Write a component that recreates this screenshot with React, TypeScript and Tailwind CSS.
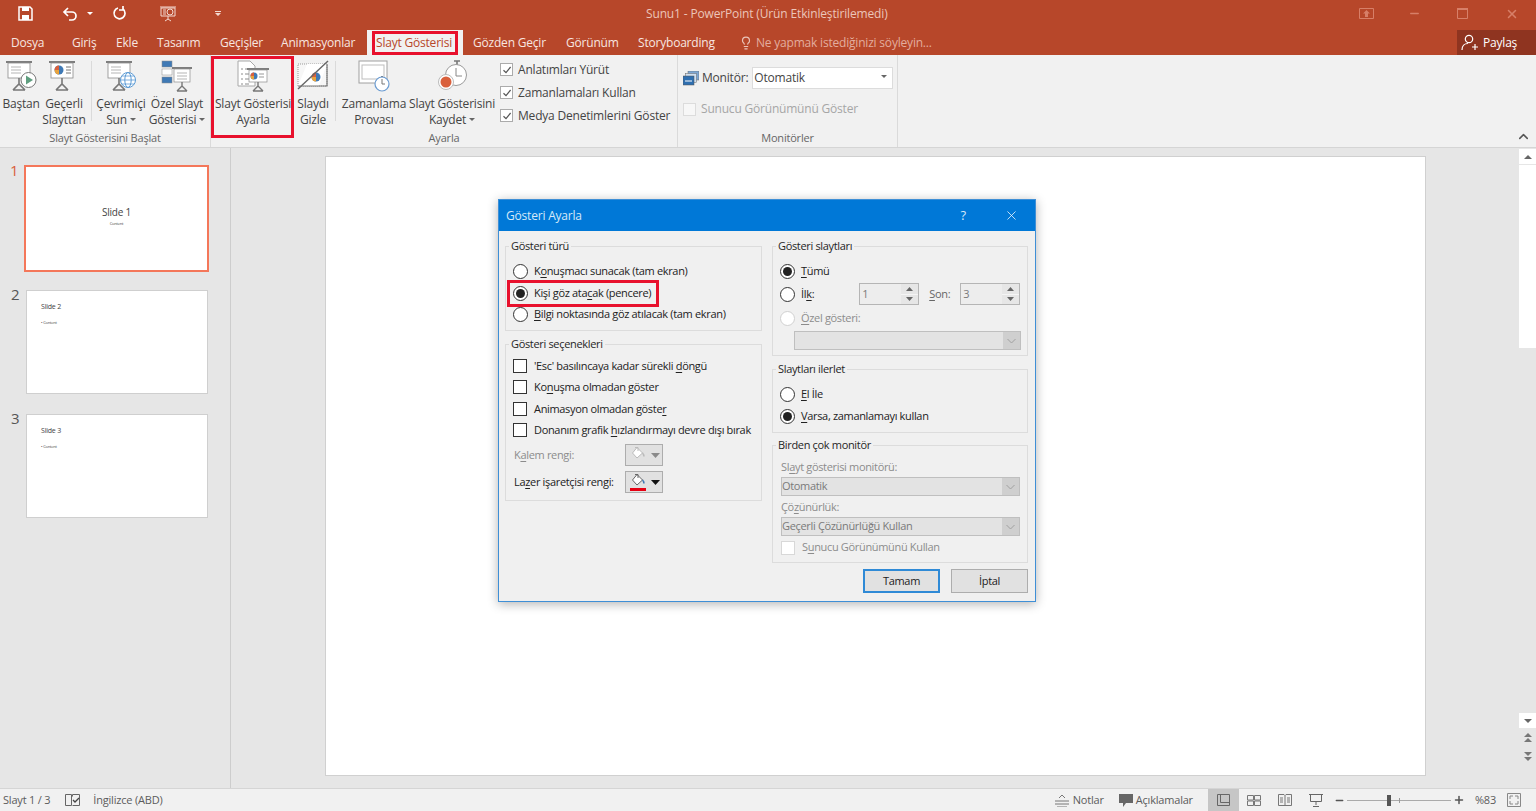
import type { ReactNode } from "react"
import { ChevronUp, Lightbulb, Minus, Plus, X } from "lucide-react"

const Caret = ({ color = "#666" }: { color?: string }) => (
  <svg width="6" height="4" viewBox="0 0 6 4" className="inline-block ml-[3px] mb-[2px]"><path d="M0 0h6L3 3z" fill={color} /></svg>
)

const Board = ({ children, stroke = "#8c8c8c" }: { children?: ReactNode; stroke?: string }) => (
  <>
    <rect x="1" y="1" width="26" height="2" fill="#7d7d7d" />
    <rect x="3" y="3" width="22" height="15" fill="#fff" stroke={stroke} strokeWidth="0.8" />
    <path d="M14 18v6M8 30l6-6 6 6M8 30h12" fill="none" stroke="#777" strokeWidth="1.6" />
    {children}
  </>
)

const Lines = () => <path d="M6 7h10M6 10h10M6 13h10" stroke="#b5b5b5" strokeWidth="1" />

const Pie = ({ cx, cy, r }: { cx: number; cy: number; r: number }) => (
  <>
    <circle cx={cx} cy={cy} r={r} fill="#3f79b5" />
    <path d={`M${cx} ${cy}V${cy - r}A${r} ${r} 0 0 0 ${cx - r} ${cy}z`} fill="#d9603c" />
    <path d={`M${cx} ${cy}H${cx - r}A${r} ${r} 0 0 0 ${cx} ${cy + r}z`} fill="#e8a33d" />
  </>
)

const Icon32 = ({ children }: { children: ReactNode }) => (
  <svg width="32" height="32" viewBox="0 0 32 32" className="mx-auto block">{children}</svg>
)

const FromStartIcon = () => (
  <Icon32>
    <Board><Lines /></Board>
    <circle cx="23.5" cy="20" r="7.5" fill="#fff" stroke="#777" />
    <path d="M21 15.5v9l7-4.5z" fill="#5f9e7f" />
  </Icon32>
)
const CurrentIcon = () => (
  <Icon32>
    <Board><Pie cx={11} cy={10} r={4.5} /><path d="M18 7h5M18 10h5M18 13h5" stroke="#777" /></Board>
  </Icon32>
)
const OnlineIcon = () => (
  <Icon32>
    <Board><Lines /></Board>
    <circle cx="23" cy="20" r="7.5" fill="#fff" stroke="#5b9bd5" />
    <ellipse cx="23" cy="20" rx="3.2" ry="7.5" fill="none" stroke="#5b9bd5" />
    <path d="M15.5 20h15M17 16h12M17 24h12" stroke="#5b9bd5" strokeWidth="0.8" />
  </Icon32>
)
const CustomIcon = () => (
  <Icon32>
    <rect x="1" y="1" width="10" height="6" fill="#3f79b5" stroke="#8c8c8c" strokeWidth="0.5" />
    <rect x="1" y="9" width="10" height="6" fill="#fff" stroke="#8c8c8c" strokeWidth="0.5" />
    <rect x="1" y="17" width="10" height="6" fill="#3f79b5" stroke="#8c8c8c" strokeWidth="0.5" />
    <rect x="11" y="7" width="20" height="2" fill="#7d7d7d" />
    <rect x="13" y="9" width="16" height="13" fill="#fff" stroke="#8c8c8c" strokeWidth="0.7" />
    <path d="M16 13h10M16 16h10M16 19h10" stroke="#b5b5b5" />
    <path d="M21 22v4M16 31l5-5 5 5M16 31h10" fill="none" stroke="#777" strokeWidth="1.4" />
  </Icon32>
)
const SetupIcon = () => (
  <Icon32>
    <path d="M1 1h12l5 5v20H1z" fill="#fff" stroke="#a8a8a8" />
    <path d="M4 9h2M8 9h5M4 14h2M8 14h4M4 19h2M8 19h4M4 24h2M8 24h4" stroke="#8c8c8c" />
    <rect x="10" y="8" width="22" height="2" fill="#7d7d7d" />
    <rect x="12" y="10" width="18" height="12" fill="#fff" stroke="#8c8c8c" strokeWidth="0.7" />
    <Pie cx={17} cy={16} r={3.5} />
    <path d="M22 14h5M22 17h5" stroke="#999" />
    <path d="M21 22v4M16 31l5-5 5 5M16 31h10" fill="none" stroke="#777" strokeWidth="1.4" />
  </Icon32>
)
const HideIcon = () => (
  <Icon32>
    <rect x="1" y="4" width="29" height="22" fill="#f7f7f7" stroke="#999" strokeDasharray="1 1" />
    <path d="M30 4H10L1 26h21z" fill="#fff" />
    <Pie cx={19} cy={17} r={4.5} />
    <path d="M31 1 1 29" stroke="#666" strokeWidth="1.4" />
    <path d="M1 26h29V4" fill="none" stroke="#777" strokeWidth="1.2" />
  </Icon32>
)
const RehearseIcon = () => (
  <Icon32>
    <rect x="1" y="1" width="28" height="22" fill="#fff" stroke="#a0a0a0" />
    <rect x="4" y="5" width="22" height="14" fill="#fff" stroke="#bdbdbd" />
    <path d="M23 17h2" stroke="#777" strokeWidth="2" />
    <circle cx="24" cy="24" r="7" fill="#fff" stroke="#6a9bd1" strokeWidth="1.2" />
    <path d="M24 19v5h3" fill="none" stroke="#777" />
  </Icon32>
)
const RecordIcon = () => (
  <Icon32>
    <path d="M18 1h6M21 1v4" stroke="#777" strokeWidth="1.6" />
    <circle cx="20" cy="15" r="10.5" fill="#fff" stroke="#9a9a9a" />
    <path d="M20 8v8h6" fill="none" stroke="#888" />
    <circle cx="10" cy="22" r="7.5" fill="#fff" stroke="#bbb" />
    <circle cx="10" cy="22" r="5.5" fill="#d9603c" />
  </Icon32>
)

const RibbonButton = ({ w, icon, lines, caret }: { w: string; icon: ReactNode; lines: string[]; caret?: boolean }) => (
  <div className={`${w} pt-[5px] text-center shrink-0`}>
    {icon}
    <div className="mt-[4px] leading-[16px] whitespace-nowrap">
      {lines.map((l, i) => (
        <div key={l}>{l}{caret && i === lines.length - 1 && <Caret />}</div>
      ))}
    </div>
  </div>
)

const GroupLabel = ({ children }: { children: ReactNode }) => (
  <div className="h-[16px] leading-[16px] text-center text-[11px] text-[#666]">{children}</div>
)

const ShortSep = () => (
  <div className="w-[8px] shrink-0 flex justify-center pt-[6px]"><div className="w-px h-[60px] bg-[#dadada]" /></div>
)

const RibbonCheck = ({ label }: { label: string }) => (
  <div className="flex items-center h-[23px]">
    <div className="w-[13px] h-[13px] bg-white border border-[#ababab] flex items-center justify-center">
      <svg width="10" height="10" viewBox="0 0 10 10"><path d="M1.5 5.2 4 7.6 8.6 2" fill="none" stroke="#555" strokeWidth="1.2" /></svg>
    </div>
    <span className="ml-[5px]">{label}</span>
  </div>
)

const Tab = ({ w, children }: { w: string; children: ReactNode }) => (
  <div className={`${w} shrink-0 whitespace-nowrap`}>{children}</div>
)

const Key = ({ children }: { children: ReactNode }) => <span className="underline underline-offset-2">{children}</span>

const Legend = ({ children }: { children: ReactNode }) => (
  <legend className="ml-[3px] px-[2px] h-[16px] leading-[16px] text-[#262626]">{children}</legend>
)

const Radio = ({ on, off }: { on?: boolean; off?: boolean }) => (
  <span className={`w-[15px] h-[15px] rounded-full bg-white border flex items-center justify-center shrink-0 ${off ? "border-[#d0d0d0]" : "border-[#333]"}`}>
    {on && <span className="w-[9px] h-[9px] rounded-full bg-[#222]" />}
  </span>
)

const Box = ({ off }: { off?: boolean }) => (
  <span className={`w-[14px] h-[14px] bg-white border shrink-0 ${off ? "border-[#d8d8d8]" : "border-[#333]"}`} />
)

const DisabledSelect = ({ value, w = "w-full" }: { value?: string; w?: string }) => (
  <div className={`${w} h-[19px] flex items-center bg-[#e3e3e3] border border-[#bfbfbf] text-[#7a7a7a]`}>
    <span className="flex-1 truncate">{value}</span>
    <span className="w-[17px] h-full bg-[#cfcfcf] flex items-center justify-center">
      <svg width="9" height="6" viewBox="0 0 9 6"><path d="M.5 1 4.5 5l4-4" fill="none" stroke="#a0a0a0" /></svg>
    </span>
  </div>
)

const Spinner = ({ value }: { value: string }) => (
  <div className="w-[60px] h-[22px] flex bg-[#ededed] border border-[#b5b5b5] text-[#7a7a7a] pl-[2px]">
    <span className="flex-1 leading-[20px]">{value}</span>
    <span className="w-[17px] flex flex-col bg-[#e6e6e6]">
      <span className="flex-1 flex items-center justify-center border-b border-[#f5f5f5]"><svg width="7" height="4" viewBox="0 0 7 4"><path d="M0 4h7L3.5 0z" fill="#666" /></svg></span>
      <span className="flex-1 flex items-center justify-center"><svg width="7" height="4" viewBox="0 0 7 4"><path d="M0 0h7L3.5 4z" fill="#666" /></svg></span>
    </span>
  </div>
)

const PaintButton = ({ active }: { active?: boolean }) => (
  <div className="w-[38px] h-[22px] ml-auto bg-[#e1e1e1] border border-[#adadad] flex items-center pl-[4px] gap-[5px] shrink-0">
    <svg width="16" height="18" viewBox="0 0 16 18">
      <path d="M7 1.5 2.5 7l4.5 5 5.5-5z" fill="#fff" stroke={active ? "#666" : "#bbb"} />
      <path d="M5 1.5h3V5" fill="none" stroke={active ? "#666" : "#bbb"} />
      <path d="M12.5 7c1.2 1.2 1.6 2.4 1.2 3.6" fill="none" stroke={active ? "#3f79b5" : "#bbb"} strokeWidth="1.5" />
      {active && <rect x="0" y="15" width="16" height="3" fill="#e60012" />}
    </svg>
    <svg width="9" height="5" viewBox="0 0 9 5"><path d="M0 0h9L4.5 5z" fill={active ? "#111" : "#8a8a8a"} /></svg>
  </div>
)

const Thumb = ({ n, title, bullet, mt }: { n: number; title: string; bullet: string; mt: string }) => (
  <div className={`${mt} flex pl-[11px]`}>
    <span className="w-[15px] text-[15px] leading-[18px] text-[#555] -mt-[5px]">{n}</span>
    <div className="w-[182px] h-[104px] bg-white border border-[#cfcfcf] pl-[14px] pt-[10px] text-[#444]">
      <div className="text-[7px] leading-[12px]">{title}</div>
      <div className="text-[4px] leading-[6px] mt-[7px]">• {bullet}</div>
    </div>
  </div>
)

const ViewBtn = ({ active, children }: { active?: boolean; children: ReactNode }) => (
  <div className={`w-[31px] h-[22px] flex items-center justify-center ${active ? "bg-[#c6c6c6]" : ""}`}>{children}</div>
)

export default function App() {
  return (
    <div className="relative w-[1536px] h-[811px] flex flex-col overflow-hidden bg-[#e6e6e6] text-[12px] text-[#444] font-['Open_Sans','Liberation_Sans',sans-serif] tracking-[-0.2px]">
      {/* title bar */}
      <div className="h-[30px] bg-[#b7472a] flex items-center text-[#f6dfd8] relative shrink-0">
        <svg width="15" height="15" viewBox="0 0 15 15" className="ml-[18px] mb-[3px]"><path d="M1 1h11l2 2v11H1z" fill="none" stroke="#fff" strokeWidth="1.5" /><path d="M4 1h7v4H4zM4 9h7v5H4z" fill="#fff" /></svg>
        <svg width="16" height="14" viewBox="0 0 16 14" className="ml-[29px] mb-[3px]"><path d="M6 1 2 5l4 4M2 5h8a4 4 0 0 1 0 8H7" fill="none" stroke="#fff" strokeWidth="1.7" /></svg>
        <svg width="6" height="4" viewBox="0 0 6 4" className="ml-[9px] mb-[3px]"><path d="M0 0h6L3 3z" fill="#fff" /></svg>
        <svg width="15" height="15" viewBox="0 0 15 15" className="ml-[19px] mb-[3px]"><path d="M6 2a5.5 5.5 0 1 0 5 1M11 0v4H7" fill="none" stroke="#fff" strokeWidth="1.7" /></svg>
        <svg width="17" height="16" viewBox="0 0 17 16" className="ml-[33px] mb-[3px]"><path d="M0 1h16M1 2h14v8H1zM8 10v3M5 15l3-2 3 2" fill="none" stroke="#f3d9d1" /><circle cx="10" cy="6" r="3" fill="none" stroke="#f3d9d1" /><path d="M3 4h3M3 6h3M3 8h3" stroke="#f3d9d1" /></svg>
        <svg width="6" height="6" viewBox="0 0 6 6" className="ml-[38px] mb-[3px]"><path d="M0 0h6v1H0zM0 2h6L3 5z" fill="#f3d9d1" /></svg>
        <div className="ml-[425px] mb-[3px] text-[12px] tracking-[-0.15px] text-[#ecc5b9] whitespace-nowrap">Sunu1 - PowerPoint (Ürün Etkinleştirilemedi)</div>
        <div className="ml-auto mb-[3px] flex items-center text-[#d77f68]">
          <svg width="15" height="11" viewBox="0 0 15 11"><path d="M.5.5h14v10H.5z" fill="none" stroke="#d77f68" /><path d="M7.5 2 4 5.5h2V9h3V5.5h2z" fill="#d77f68" /></svg>
          <Minus size={13} strokeWidth={2.4} className="ml-[34px]" />
          <svg width="11" height="11" viewBox="0 0 11 11" className="ml-[36px]"><path d="M.5.5h10v10H.5z" fill="none" stroke="#d77f68" /><path d="M0 0h11v2H0z" fill="#d77f68" /></svg>
          <X size={14} strokeWidth={2.6} className="ml-[37px] mr-[17px]" />
        </div>
      </div>

      {/* tabs */}
      <div className="h-[25px] bg-[#b7472a] flex items-center pl-[11px] text-[#f8e6e0] shrink-0">
        <Tab w="w-[61px]">Dosya</Tab>
        <Tab w="w-[44px]">Giriş</Tab>
        <Tab w="w-[41px]">Ekle</Tab>
        <Tab w="w-[63px]">Tasarım</Tab>
        <Tab w="w-[61px]">Geçişler</Tab>
        <Tab w="w-[86px]">Animasyonlar</Tab>
        <div className="relative w-[96px] h-full bg-[#f1f1f1] text-[#b7472a] pl-[9px] flex items-center shrink-0 whitespace-nowrap">
          Slayt Gösterisi
          <div className="absolute left-[5px] right-[5px] top-[1px] bottom-0 border-[3px] border-[#e8112d]" />
        </div>
        <Tab w="w-[93px] ml-[10px]">Gözden Geçir</Tab>
        <Tab w="w-[72px]">Görünüm</Tab>
        <Tab w="w-[101px]">Storyboarding</Tab>
        <Lightbulb size={14} className="text-[#eac4b9] shrink-0" />
        <span className="ml-[3px] text-[#e3ad9e] whitespace-nowrap">Ne yapmak istediğinizi söyleyin...</span>
        <div className="ml-auto w-[79px] h-full bg-[#8f3420] text-white flex items-center pl-[4px] shrink-0">
          <svg width="17" height="17" viewBox="0 0 17 17"><circle cx="8" cy="5" r="3.7" fill="none" stroke="#fff" strokeWidth="1.2" /><path d="M1 16c0-4 2.5-6.5 6-6.5M11 13h6M14 10v6" fill="none" stroke="#fff" strokeWidth="1.2" /></svg>
          <span className="ml-[5px]">Paylaş</span>
        </div>
      </div>

      {/* ribbon */}
      <div className="h-[93px] bg-[#f1f1f1] border-b border-[#d5d5d5] flex shrink-0">
        <div className="w-[211px] border-r border-[#dadada] flex flex-col shrink-0">
          <div className="h-[75px] flex pl-[1px]">
            <RibbonButton w="w-[40px]" icon={<FromStartIcon />} lines={["Baştan"]} />
            <RibbonButton w="w-[46px]" icon={<CurrentIcon />} lines={["Geçerli", "Slayttan"]} />
            <ShortSep />
            <RibbonButton w="w-[52px]" icon={<OnlineIcon />} lines={["Çevrimiçi", "Sun"]} caret />
            <RibbonButton w="w-[60px]" icon={<CustomIcon />} lines={["Özel Slayt", "Gösterisi"]} caret />
          </div>
          <GroupLabel>Slayt Gösterisini Başlat</GroupLabel>
        </div>
        <div className="w-[467px] border-r border-[#dadada] flex flex-col shrink-0">
          <div className="h-[75px] flex">
            <div className="relative">
              <RibbonButton w="w-[84px]" icon={<SetupIcon />} lines={["Slayt Gösterisi", "Ayarla"]} />
              <div className="absolute left-0 top-[1px] w-[83px] h-[82px] border-[3px] border-[#e8112d]" />
            </div>
            <RibbonButton w="w-[36px]" icon={<HideIcon />} lines={["Slaydı", "Gizle"]} />
            <ShortSep />
            <RibbonButton w="w-[70px]" icon={<RehearseIcon />} lines={["Zamanlama", "Provası"]} />
            <RibbonButton w="w-[86px]" icon={<RecordIcon />} lines={["Slayt Gösterisini", "Kaydet"]} caret />
            <div className="pl-[5px] pt-[3px] whitespace-nowrap">
              <RibbonCheck label="Anlatımları Yürüt" />
              <RibbonCheck label="Zamanlamaları Kullan" />
              <RibbonCheck label="Medya Denetimlerini Göster" />
            </div>
          </div>
          <GroupLabel>Ayarla</GroupLabel>
        </div>
        <div className="w-[220px] border-r border-[#dadada] flex flex-col shrink-0">
          <div className="h-[75px] pl-[5px] pt-[12px]">
            <div className="flex items-center h-[22px]">
              <svg width="16" height="15" viewBox="0 0 16 15"><rect x="5" y="0" width="11" height="9" fill="#7da7d4" stroke="#666" strokeWidth="0.5" /><rect x="2.5" y="2.5" width="11" height="9" fill="#cfe0f2" stroke="#666" strokeWidth="0.5" /><rect x="0" y="5" width="11" height="9" fill="#2f6fb0" stroke="#555" strokeWidth="0.5" /><path d="M2 10h7" stroke="#fff" /></svg>
              <span className="ml-[3px]">Monitör:</span>
              <div className="ml-[4px] w-[141px] h-[22px] bg-white border border-[#dcdcdc] flex items-center pl-[1px] pr-[5px]">
                <span className="flex-1">Otomatik</span>
                <Caret />
              </div>
            </div>
            <div className="flex items-center h-[14px] mt-[13px] text-[#a6a6a6]">
              <span className="w-[13px] h-[13px] bg-[#f7f7f7] border border-[#dcdcdc]" />
              <span className="ml-[5px]">Sunucu Görünümünü Göster</span>
            </div>
          </div>
          <GroupLabel>Monitörler</GroupLabel>
        </div>
        <div className="flex-1 flex items-end justify-end pr-[5px] pb-[3px]">
          <ChevronUp size={15} strokeWidth={2.4} className="text-[#555]" />
        </div>
      </div>

      {/* main */}
      <div className="flex-1 flex min-h-0">
        <div className="w-[231px] border-r border-[#cdcdcd] pt-[17px] shrink-0">
          <div className="flex pl-[11px]">
            <span className="w-[13px] text-[15px] leading-[18px] text-[#d9603c] -mt-[4px] -ml-[1px] mr-[1px]">1</span>
            <div className="w-[185px] h-[107px] bg-white border-[2px] border-[#f4775a] flex flex-col items-center pt-[39px] text-[#444]">
              <div className="text-[10px] leading-[12px]">Slide 1</div>
              <div className="text-[4px] leading-[6px] mt-[3px]">Content</div>
            </div>
          </div>
          <Thumb n={2} title="Slide 2" bullet="Content" mt="mt-[18px]" />
          <Thumb n={3} title="Slide 3" bullet="Content" mt="mt-[20px]" />
        </div>
        <div className="flex-1 pl-[94px] pt-[8px]">
          <div className="w-[1101px] h-[620px] bg-white border border-[#d0d0d0]" />
        </div>
        <div className="w-[17px] flex flex-col items-center shrink-0 pt-[1px]">
          <div className="w-full h-[15px] bg-white flex items-center justify-center"><svg width="8" height="4" viewBox="0 0 8 4"><path d="M0 4h8L4 0z" fill="#666" /></svg></div>
          <div className="w-full h-[183px] mt-[1px] bg-white" />
          <div className="w-full h-[15px] mt-[365px] bg-white flex items-center justify-center"><svg width="8" height="4" viewBox="0 0 8 4"><path d="M0 0h8L4 4z" fill="#666" /></svg></div>
          <svg width="8" height="9" viewBox="0 0 8 9" className="mt-[5px]"><path d="M0 4h8L4 0zM0 9h8L4 5z" fill="#777" /></svg>
          <svg width="8" height="9" viewBox="0 0 8 9" className="mt-[10px]"><path d="M0 0h8L4 4zM0 5h8L4 9z" fill="#777" /></svg>
        </div>
      </div>

      {/* status bar */}
      <div className="h-[23px] bg-[#f1f1f1] border-t border-[#d5d5d5] flex items-center text-[11px] text-[#5c5c5c] shrink-0">
        <span className="ml-[3px]">Slayt 1 / 3</span>
        <svg width="15" height="13" viewBox="0 0 15 13" className="ml-[15px]"><path d="M.5.5h6v11h-6zM7.5 2.5V.5h7v11h-7" fill="none" stroke="#666" /><path d="m8 6 2 2 4-4" fill="none" stroke="#444" strokeWidth="1.3" /></svg>
        <span className="ml-[13px]">İngilizce (ABD)</span>
        <div className="ml-auto flex items-center">
          <svg width="14" height="13" viewBox="0 0 14 13"><path d="M0 7h14M0 10h14M2 13h10M4 4l3-3 3 3" fill="none" stroke="#777" /></svg>
          <span className="ml-[4px]">Notlar</span>
          <svg width="14" height="13" viewBox="0 0 14 13" className="ml-[15px]"><path d="M0 0h14v9H7l-3 4V9H0z" fill="#666" /></svg>
          <span className="ml-[3px]">Açıklamalar</span>
          <div className="ml-[15px] flex">
            <ViewBtn active><svg width="13" height="12" viewBox="0 0 13 12"><path d="M.5.5h12v11H.5zM3.5.5v8h9" fill="none" stroke="#666" /></svg></ViewBtn>
            <ViewBtn><svg width="14" height="11" viewBox="0 0 14 11"><path d="M.5.5h6v4.5h-6zM7.5.5h6v4.5h-6zM.5 6h6v4.5h-6zM7.5 6h6v4.5h-6z" fill="none" stroke="#777" /></svg></ViewBtn>
            <ViewBtn><svg width="14" height="12" viewBox="0 0 14 12"><path d="M.5.5h5.5l1 1 1-1h5.5v11H.5zM7 1.5v10M2 4h3M2 6h3M2 8h3M9 4h3M9 6h3M9 8h3" fill="none" stroke="#777" /></svg></ViewBtn>
            <ViewBtn><svg width="14" height="13" viewBox="0 0 14 13"><path d="M0 .5h14M1.5 1v6.5h11V1M7 8v3M4 12.5h6" fill="none" stroke="#666" /></svg></ViewBtn>
          </div>
          <Minus size={11} strokeWidth={3} className="ml-[2px] text-[#555]" />
          <div className="relative w-[104px] h-px bg-[#aaa] ml-[2px]">
            <div className="absolute left-[40px] -top-[5px] w-[4px] h-[11px] bg-[#555]" />
            <div className="absolute left-[52px] -top-[2px] w-px h-[5px] bg-[#999]" />
          </div>
          <Plus size={12} strokeWidth={3} className="ml-[2px] text-[#555]" />
          <span className="ml-[10px]">%83</span>
          <svg width="14" height="14" viewBox="0 0 14 14" className="ml-[11px] mr-[15px]"><path d="M.5.5h13v13H.5zM3 6V3h3M8 3h3v3M3 8v3h3M8 11h3V8" fill="none" stroke="#888" /></svg>
        </div>
      </div>

      {/* dialog */}
      <div className="absolute left-[498px] top-[199px] w-[538px] h-[403px] flex flex-col bg-[#f0f0f0] border border-[#3f8fd6] shadow-[0_2px_10px_rgba(0,0,0,0.3)] text-[11px] text-[#222] tracking-[-0.33px]">
        <div className="h-[31px] bg-[#0078d7] text-[#d6e9f8] flex items-center pl-[7px] text-[12px] tracking-[-0.2px] shrink-0">
          <span>Gösteri Ayarla</span>
          <span className="ml-auto text-[13px]">?</span>
          <X size={15} strokeWidth={1.2} className="ml-[38px] mr-[16px] text-white" />
        </div>
        <div className="flex pl-[6px] pt-[7px] gap-[10px]">
          {/* left column */}
          <div className="w-[257px] shrink-0">
            <fieldset className="border border-[#dcdcdc] h-[93px] min-w-0">
              <Legend>Gösteri türü</Legend>
              <div className="pl-[7px] pt-[6px]">
                <div className="flex items-center gap-[6px] h-[22px]"><Radio /><span>K<Key>o</Key>nuşmacı sunacak (tam ekran)</span></div>
                <div className="relative flex items-center gap-[6px] h-[22px]">
                  <Radio on /><span>Kişi göz ata<Key>c</Key>ak (pencere)</span>
                  <div className="absolute left-[-6px] top-[-2px] w-[152px] h-[27px] border-[3px] border-[#e8112d]" />
                </div>
                <div className="flex items-center gap-[6px] h-[21px]"><Radio /><span><Key>B</Key>ilgi noktasında göz atılacak (tam ekran)</span></div>
              </div>
            </fieldset>
            <fieldset className="border border-[#dcdcdc] mt-[5px] h-[165px] min-w-0">
              <Legend>Gösteri seçenekleri</Legend>
              <div className="pl-[7px] pt-[3px]">
                <div className="flex items-center gap-[7px] h-[21.5px]"><Box /><span>'Esc' basılıncaya kadar sürekli <Key>d</Key>öngü</span></div>
                <div className="flex items-center gap-[7px] h-[21.5px]"><Box /><span>Ko<Key>n</Key>uşma olmadan göster</span></div>
                <div className="flex items-center gap-[7px] h-[21.5px]"><Box /><span>Animasyon olmadan göste<Key>r</Key></span></div>
                <div className="flex items-center gap-[7px] h-[21.5px]"><Box /><span>Donanım grafik <Key>h</Key>ızlandırmayı devre dışı bırak</span></div>
                <div className="flex items-center h-[26px] mt-[1px] text-[#8c8c8c] w-[150px]"><span className="pl-[1px] whitespace-nowrap">K<Key>a</Key>lem rengi:</span><PaintButton /></div>
                <div className="flex items-center h-[26px] mt-[1px] w-[150px]"><span className="pl-[1px] whitespace-nowrap">La<Key>z</Key>er işaretçisi rengi:</span><PaintButton active /></div>
              </div>
            </fieldset>
          </div>
          {/* right column */}
          <div className="w-[256px] shrink-0">
            <fieldset className="border border-[#dcdcdc] h-[118px] min-w-0">
              <Legend>Gösteri slaytları</Legend>
              <div className="pl-[7px] pt-[6px]">
                <div className="flex items-center gap-[6px] h-[22px]"><Radio on /><span><Key>T</Key>ümü</span></div>
                <div className="flex items-center gap-[6px] h-[24px]">
                  <Radio /><span>İl<Key>k</Key>:</span>
                  <div className="ml-[39px]"><Spinner value="1" /></div>
                  <span className="ml-[4px] text-[#666]"><Key>S</Key>on:</span>
                  <div className="ml-[4px]"><Spinner value="3" /></div>
                </div>
                <div className="flex items-center gap-[6px] h-[24px] text-[#8c8c8c]"><Radio off /><span><Key>Ö</Key>zel gösteri:</span></div>
                <div className="ml-[14px] mt-[1px] w-[227px]"><DisabledSelect /></div>
              </div>
            </fieldset>
            <fieldset className="border border-[#dcdcdc] mt-[5px] h-[72px] min-w-0">
              <Legend>Slaytları ilerlet</Legend>
              <div className="pl-[7px] pt-[6px]">
                <div className="flex items-center gap-[6px] h-[22px]"><Radio /><span><Key>E</Key>l İle</span></div>
                <div className="flex items-center gap-[6px] h-[22px]"><Radio on /><span><Key>V</Key>arsa, zamanlamayı kullan</span></div>
              </div>
            </fieldset>
            <fieldset className="border border-[#dcdcdc] mt-[4px] h-[126px] min-w-0">
              <Legend>Birden çok monitör</Legend>
              <div className="pl-[8px] pr-[7px] pt-[5px] text-[#8c8c8c]">
                <div className="h-[19px] leading-[18px]">Sl<Key>a</Key>yt gösterisi monitörü:</div>
                <DisabledSelect value="Otomatik" />
                <div className="h-[21px] leading-[22px]">Çö<Key>z</Key>ünürlük:</div>
                <DisabledSelect value="Geçerli Çözünürlüğü Kullan" />
                <div className="flex items-center gap-[7px] h-[21px] mt-[1px]"><Box off /><span>S<Key>u</Key>nucu Görünümünü Kullan</span></div>
              </div>
            </fieldset>
            <div className="flex justify-end gap-[11px] mt-[6px]">
              <div className="w-[77px] h-[24px] bg-[#e1e1e1] border-[2px] border-[#2f8ad6] flex items-center justify-center">Tamam</div>
              <div className="w-[77px] h-[24px] bg-[#e1e1e1] border border-[#adadad] flex items-center justify-center">İptal</div>
            </div>
          </div>
        </div>
      </div>
    </div>
  )
}
